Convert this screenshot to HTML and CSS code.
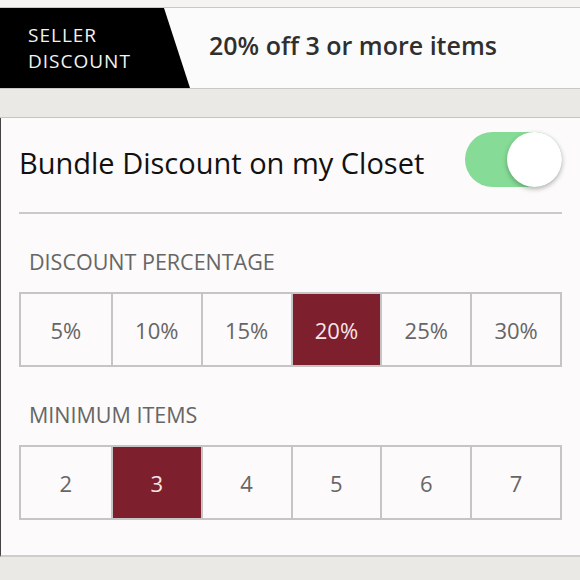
FILE: index.html
```html
<!DOCTYPE html>
<html lang="en">
<head>
    <meta charset="UTF-8">
    <meta name="viewport" content="width=device-width, initial-scale=1.0">
    <title>Bundle Discount</title>
    <link rel="stylesheet" href="styles.css">
</head>
<body>
    <div class="top-strip"></div>
    <div class="banner">
        <div class="tag">SELLER<br>DISCOUNT</div>
        <div class="banner-text">20% off 3 or more items</div>
    </div>
    <div class="band"></div>
    <div class="card">
        <div class="toggle-row">
            <div class="toggle-label">Bundle Discount on my Closet</div>
            <div class="switch"><div class="knob"></div></div>
        </div>

        <div class="section-label">DISCOUNT PERCENTAGE</div>
        <div class="segments">
            <div class="seg">5%</div>
            <div class="seg">10%</div>
            <div class="seg">15%</div>
            <div class="seg active">20%</div>
            <div class="seg">25%</div>
            <div class="seg">30%</div>
        </div>

        <div class="section-label">MINIMUM ITEMS</div>
        <div class="segments">
            <div class="seg">2</div>
            <div class="seg active">3</div>
            <div class="seg">4</div>
            <div class="seg">5</div>
            <div class="seg">6</div>
            <div class="seg">7</div>
        </div>
    </div>
    <div class="band"></div>
</body>
</html>
```

FILE: styles.css
```css
body, html {
    margin: 0;
    padding: 0;
    height: 100%;
    overflow: hidden;
    background-color: #ebe9e5;
    font-family: "Open Sans", Lato, sans-serif;
}

.top-strip {
    height: 7px;
    background-color: #f5f4f2;
    border-bottom: 1px solid #c9c8c5;
}

.banner {
    display: flex;
    align-items: center;
    height: 80px;
    background-color: #fcfbfb;
    border-bottom: 1px solid #c9c7c3;
}

.tag {
    display: flex;
    align-items: center;
    box-sizing: border-box;
    width: 190px;
    height: 100%;
    padding-left: 28px;
    background-color: #000;
    color: #f2f2f2;
    font-size: 19px;
    line-height: 26px;
    letter-spacing: 1px;
    clip-path: polygon(0 0, 164px 0, 190px 100%, 0 100%);
}

.banner-text {
    margin-left: 19px;
    margin-top: -7px;
    color: #2f2f2f;
    font-size: 25px;
    font-weight: 600;
}

.band {
    height: 28px;
    background-color: #ebe9e5;
    border-bottom: 1px solid #c7c5c2;
}

.card {
    height: 439px;
    box-sizing: border-box;
    padding: 0 18px 0 18px;
    background-color: #fcfafa;
    border-left: 1px solid #444;
    border-bottom: 2px solid #cfcdca;
}

.toggle-row {
    display: flex;
    align-items: center;
    justify-content: space-between;
    height: 94px;
    border-bottom: 2px solid #cbc9c9;
}

.toggle-label {
    margin-top: -6px;
    color: #111;
    font-size: 29px;
}

.switch {
    position: relative;
    width: 97px;
    height: 55px;
    margin-top: -11px;
    border-radius: 28px;
    background-color: #86dc96;
}

.knob {
    position: absolute;
    top: 0;
    right: 0;
    width: 55px;
    height: 55px;
    border-radius: 50%;
    background-color: #fff;
    box-shadow: 0 2px 5px rgba(0, 0, 0, 0.3);
}

.section-label {
    margin: 36px 0 18px 10px;
    height: 24px;
    line-height: 24px;
    color: #666;
    font-size: 21.5px;
}

.segments {
    display: grid;
    grid-template-columns: repeat(6, 1fr);
    height: 75px;
    border: 2px solid #c6c4c4;
    box-sizing: border-box;
}

.seg {
    display: flex;
    align-items: center;
    justify-content: center;
    color: #666;
    font-size: 22px;
    border-left: 2px solid #c6c4c4;
}

.seg:first-child {
    border-left: none;
}

.seg.active {
    background-color: #7e1f2e;
    color: #f5e6e8;
}
```
